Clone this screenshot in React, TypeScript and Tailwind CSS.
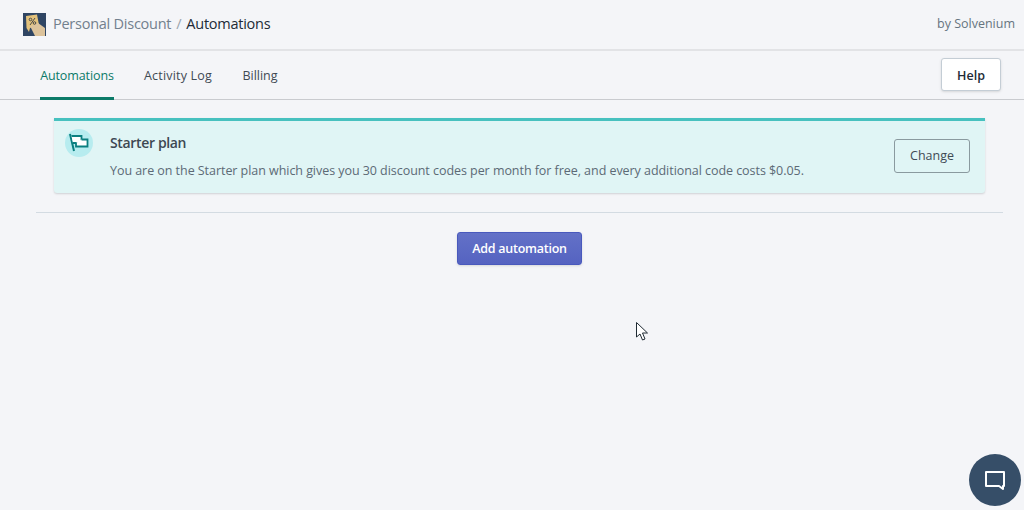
import React from "react"

const font = { fontFamily: '"Open Sans", "Noto Sans", sans-serif' }

const Logo = () => (
  <svg width="23" height="23" viewBox="0 0 23 23" className="shrink-0">
    <rect width="23" height="23" fill="#2f4563" />
    <path d="M3 3 L14 1.5 L16 12 L7 15 L6 19 L3.5 15 Z" fill="#e3c27c" />
    <path d="M7 13 L15 10 L22 15 L22 23 L12 23 L9 17 Z" fill="#dcc39c" />
    <path d="M7 12 L12 5" stroke="#4a4a4a" strokeWidth="1" />
    <circle cx="7.5" cy="6.5" r="1.3" fill="none" stroke="#4a4a4a" strokeWidth="1" />
    <circle cx="11.5" cy="10" r="1.3" fill="none" stroke="#4a4a4a" strokeWidth="1" />
  </svg>
)

const FlagIcon = () => (
  <div className="w-7 h-7 rounded-full bg-[#b7ecef] flex items-center justify-center shrink-0">
    <svg width="20" height="20" viewBox="0 0 20 20">
      <path d="M1 1 L5 18" stroke="#0b7f80" strokeWidth="2" fill="none" />
      <path d="M2.5 3 H12.5 V10 H4" fill="#ffffff" stroke="#0b7f80" strokeWidth="1.8" />
      <path d="M12.5 6.5 H18.5 V13.5 H7 V10" fill="#ffffff" stroke="#0b7f80" strokeWidth="1.8" />
    </svg>
  </div>
)

const App = () => {
  const tabs = [
    { label: "Automations", width: "w-[74px] text-[#0b7a68] border-b-[3px] border-[#0b7a68] pt-[5px] -mb-px tracking-[-0.1px]" },
    { label: "Activity Log", width: "w-[68px] text-[#3f4a54] pt-[2px] tracking-[0.2px]" },
    { label: "Billing", width: "w-[36px] text-[#3f4a54] pt-[2px]" },
  ]

  return (
    <div className="relative w-[1024px] h-[510px] overflow-hidden bg-[#f4f5f8] text-[#212b36]" style={font}>
      <header className="h-[51px] flex items-center justify-between pl-[23px] pr-[9px] border-b-2 border-[#e2e3e6]">
        <div className="flex items-center gap-[7px]">
          <Logo />
          <div className="flex gap-[5px] text-[14.5px] tracking-[-0.25px] -mt-[2px]">
            <span className="text-[#72808d]">Personal Discount</span>
            <span className="text-[#9aa4ad]">/</span>
            <span className="text-[#212b36]">Automations</span>
          </div>
        </div>
        <span className="text-[12.5px] text-[#66747f] -mt-px">by Solvenium</span>
      </header>

      <nav className="h-[49px] flex items-stretch justify-between pl-10 pr-[23px] border-b border-[#c9cbcf]">
        <div className="flex gap-[30px]">
          {tabs.map((tab) => (
            <div key={tab.label} className={`flex items-center justify-center whitespace-nowrap text-[12.5px] ${tab.width}`}>
              {tab.label}
            </div>
          ))}
        </div>
        <button className="self-start mt-[7px] w-[60px] h-[33px] pt-[3px] bg-white rounded-[3px] border border-[#c4cdd5] shadow-sm text-[12.5px] font-semibold text-[#212b36]">
          Help
        </button>
      </nav>

      <main className="pl-[36px] pr-[21px] pt-[18px]">
        <section className="mx-[18px] h-[75px] bg-[#e0f5f5] border-t-[3px] border-[#47c1bf] rounded-b-[3px] shadow-[0_1px_2px_rgba(63,63,68,0.2)] flex items-center pl-[11px] pr-[15px]">
          <div className="self-start mt-[8px]">
            <FlagIcon />
          </div>
          <div className="ml-[17px] flex-1 self-start mt-[12px]">
            <h2 className="text-[14px] leading-[20px] font-semibold text-[#3d4852] tracking-[-0.35px]">Starter plan</h2>
            <p className="mt-[9px] text-[12.5px] leading-[18px] tracking-[-0.05px] text-[#5c6a75]">
              You are on the Starter plan which gives you 30 discount codes per month for free, and every additional code costs $0.05.
            </p>
          </div>
          <button className="w-[76px] h-[34px] -mt-[3px] pt-[2px] rounded-[3px] border border-[#8a9a9f] text-[12.5px] text-[#3f4a54]">
            Change
          </button>
        </section>

        <div className="mt-[19px] border-t border-[#d3dbe2]" />

        <div className="mt-[19px] flex justify-center">
          <button className="w-[125px] h-[33px] pt-[2px] rounded-[3px] border border-[#4959bd] bg-gradient-to-b from-[#6371c7] to-[#5563c1] text-[12.5px] font-semibold tracking-[-0.25px] text-white shadow-sm">
            Add automation
          </button>
        </div>
      </main>

      {/* mouse pointer left in the screenshot */}
      <svg width="14" height="20" viewBox="0 0 14 20" className="absolute left-[636px] top-[322px]">
        <path d="M0.5 0.5 V15 L4 12 L6.5 18 L9 17 L6.5 11 L11.5 11 Z" fill="#ffffff" stroke="#1f2a33" strokeWidth="1" />
      </svg>

      <div className="absolute left-[969px] top-[454px] w-[52px] h-[52px] rounded-full bg-[#364e68] flex items-center justify-center">
        <svg width="22" height="21" viewBox="0 0 22 21">
          <path d="M2 2 H20 V16 H19 L19 19 L15 16 H2 Z" fill="none" stroke="#ffffff" strokeWidth="2" strokeLinejoin="round" />
        </svg>
      </div>
    </div>
  )
}

export default App
